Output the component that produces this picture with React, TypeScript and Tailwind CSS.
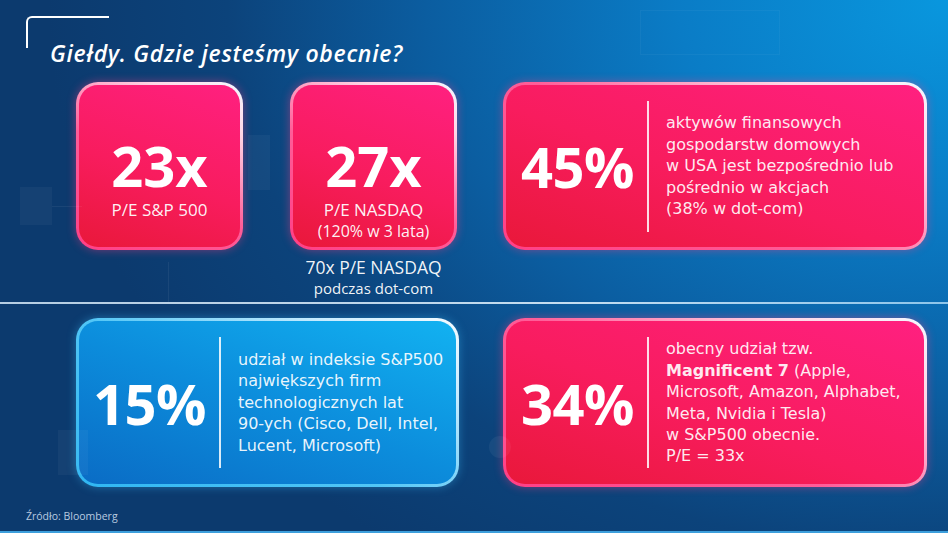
import React from "react";

const PINK_BORDER =
  "bg-[linear-gradient(30deg,#ff3f86_0%,#ff5d98_45%,#ffd6e6_80%,#f4f8ff_100%)] shadow-[0_0_10px_rgba(255,60,130,0.45)]";
const PINK_FILL = "bg-[linear-gradient(20deg,#e9183a_0%,#f81c5e_45%,#ff2080_100%)]";
const BLUE_BORDER =
  "bg-[linear-gradient(30deg,#2fb6f2_0%,#52c6f6_45%,#c9ecff_80%,#f4fbff_100%)] shadow-[0_0_10px_rgba(60,190,250,0.4)]";
const BLUE_FILL = "bg-[linear-gradient(20deg,#0a6cc5_0%,#0c8ddc_50%,#12b2f1_100%)]";

const BODY_FONT = { fontFamily: '"DejaVu Sans", "Noto Sans", sans-serif' };

function Card({
  variant,
  className,
  children,
}: {
  variant: "pink" | "blue";
  className?: string;
  children: React.ReactNode;
}) {
  const border = variant === "pink" ? PINK_BORDER : BLUE_BORDER;
  const fill = variant === "pink" ? PINK_FILL : BLUE_FILL;
  return (
    <div className={`rounded-[22px] p-[3px] ${border} ${className ?? ""}`}>
      <div className={`h-full w-full rounded-[19px] ${fill}`}>{children}</div>
    </div>
  );
}

function WideStat({
  value,
  padLeft,
  children,
}: {
  value: string;
  padLeft: string;
  children: React.ReactNode;
}) {
  return (
    <div className={`flex h-full items-center ${padLeft}`}>
      <div className="w-[112px] text-[56px] font-bold leading-[64px] tracking-[-0.5px] text-white">
        {value}
      </div>
      <div className="ml-[14px] h-[131px] w-[2px] bg-white/85" />
      <div className="ml-[17px] text-[16px] leading-[21.4px] text-white/92" style={BODY_FONT}>
        {children}
      </div>
    </div>
  );
}

export default function App() {
  return (
    <div
      className="relative h-[533px] w-[948px] overflow-hidden bg-[radial-gradient(ellipse_95%_130%_at_100%_0%,#0997de_0%,#0a7cc6_30%,#0b5da0_58%,#0c437b_80%,#0c3a6e_100%)]"
      style={{ fontFamily: '"Open Sans", "Noto Sans", sans-serif' }}
    >
      {/* faint circuit decoration */}
      <div className="absolute left-[20px] top-[187px] h-[38px] w-[32px] bg-white/[0.04]" />
      <div className="absolute left-[52px] top-[206px] h-px w-[30px] bg-white/[0.06]" />
      <div className="absolute left-[248px] top-[135px] h-[55px] w-[22px] bg-white/[0.04]" />
      <div className="absolute left-[168px] top-[262px] h-[40px] w-px bg-white/[0.06]" />
      <div className="absolute left-[58px] top-[430px] h-[45px] w-[30px] bg-white/[0.04]" />
      <div className="absolute left-[489px] top-[436px] h-[22px] w-[22px] rounded-full bg-white/[0.05]" />
      <div className="absolute left-[640px] top-[10px] h-[45px] w-[140px] border border-white/[0.04]" />

      {/* header */}
      <div className="relative h-[82px]">
        <div className="absolute left-[26px] top-[16px] h-[32px] w-[83px] rounded-tl-[6px] border-l-2 border-t-2 border-white" />
        <h1 className="pl-[50px] pt-[38px] text-[23px] font-semibold italic leading-[30px] tracking-[0.7px] text-white">
          Giełdy. Gdzie jesteśmy obecnie?
        </h1>
      </div>

      {/* row 1 */}
      <div className="flex h-[220px] items-start pl-[76px]">
        <Card variant="pink" className="h-[168px] w-[167px]">
          <div className="flex flex-col items-center pt-[48px] text-white">
            <div className="text-[56px] font-bold leading-[64px]">23x</div>
            <div className="mt-[2px] text-[17px] leading-[22px] text-white/95">P/E S&amp;P 500</div>
          </div>
        </Card>

        <div className="ml-[47px] flex w-[167px] flex-col items-center">
          <Card variant="pink" className="h-[168px] w-[167px]">
            <div className="flex flex-col items-center pt-[48px] text-white">
              <div className="text-[56px] font-bold leading-[64px]">27x</div>
              <div className="mt-[2px] text-[17px] leading-[22px] text-white/95">P/E NASDAQ</div>
              <div className="text-[16px] leading-[20px] text-white/95">(120% w 3 lata)</div>
            </div>
          </Card>
          <div className="mt-[6px] text-[17.5px] leading-[22px] text-white/95">70x P/E NASDAQ</div>
          <div className="text-[15px] leading-[20px] text-white/95">podczas dot-com</div>
        </div>

        <Card variant="pink" className="ml-[46px] h-[168px] w-[424px]">
          <WideStat value="45%" padLeft="pl-[15px]">
            aktywów finansowych
            <br />
            gospodarstw domowych
            <br />w USA jest bezpośrednio lub
            <br />
            pośrednio w akcjach
            <br />
            (38% w dot-com)
          </WideStat>
        </Card>
      </div>

      {/* divider */}
      <div className="h-[2px] w-full bg-[linear-gradient(90deg,#c9def0,#d8ecfa_60%,#9ccff0)] opacity-90" />

      {/* row 2 */}
      <div className="mt-[14px] flex pl-[76px]">
        <Card variant="blue" className="h-[169px] w-[383px]">
          <WideStat value="15%" padLeft="pl-[14px]">
            udział w indeksie S&amp;P500
            <br />
            największych firm
            <br />
            technologicznych lat
            <br />
            90-ych (Cisco, Dell, Intel,
            <br />
            Lucent, Microsoft)
          </WideStat>
        </Card>

        <Card variant="pink" className="ml-[44px] h-[169px] w-[424px]">
          <WideStat value="34%" padLeft="pl-[15px]">
            obecny udział tzw.
            <br />
            <span className="font-bold">Magnificent 7</span> (Apple,
            <br />
            Microsoft, Amazon, Alphabet,
            <br />
            Meta, Nvidia i Tesla)
            <br />w S&amp;P500 obecnie.
            <br />
            P/E = 33x
          </WideStat>
        </Card>
      </div>

      {/* footer */}
      <div className="pl-[26px] pt-[22px] text-[10.5px] leading-[14px] text-[#b9cbe0]">Źródło: Bloomberg</div>
      <div className="absolute bottom-0 left-0 h-[2px] w-full bg-[#3d9fdc]" />
    </div>
  );
}
